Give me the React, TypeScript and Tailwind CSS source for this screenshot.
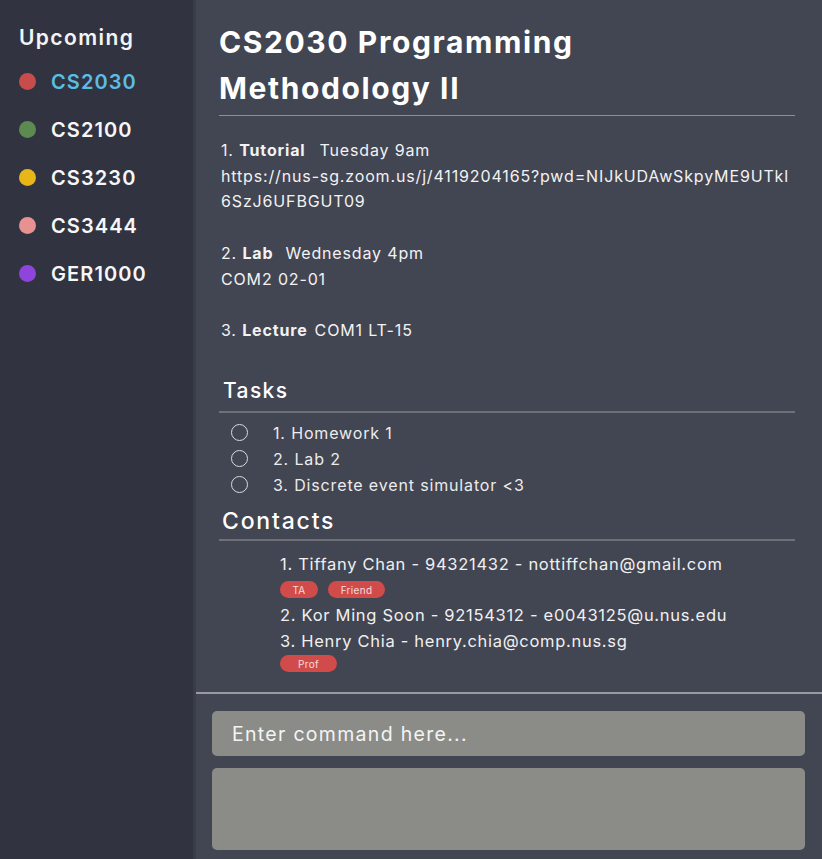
import React from 'react';

const modules = [
  { code: 'CS2030', dot: 'bg-[#c94c4c]', active: true },
  { code: 'CS2100', dot: 'bg-[#5d8a50]', active: false },
  { code: 'CS3230', dot: 'bg-[#e6b716]', active: false },
  { code: 'CS3444', dot: 'bg-[#e89191]', active: false },
  { code: 'GER1000', dot: 'bg-[#8e44dd]', active: false },
];

const tasks = ['1. Homework 1', '2. Lab 2', '3. Discrete event simulator <3'];

const Tag = ({ label, w }: { label: string; w: string }) => (
  <span className={`inline-flex h-[17px] ${w} items-center justify-center rounded-full bg-[#d24b4b] text-[10px] leading-none tracking-[0.3px] text-[#f3dede]`}>
    {label}
  </span>
);

export default function App() {
  return (
    <div className="flex h-screen w-full font-['Inter',sans-serif] text-white">
      {/* sidebar */}
      <aside className="w-[196px] shrink-0 border-r-[3px] border-[#3a3c48] bg-[#313440] pl-[19px] pt-[23px]">
        <h2 className="text-[21px] font-semibold leading-[30px] tracking-[1.4px] text-[#f4f4f4]">Upcoming</h2>
        <ul className="mt-[14px] flex flex-col gap-[19px]">
          {modules.map(m => (
            <li key={m.code} className="flex h-[29px] items-center">
              <span className={`h-[17px] w-[17px] rounded-full ${m.dot}`} />
              <span
                className={`ml-[15px] text-[20px] font-semibold tracking-[1.1px] ${m.active ? 'text-[#5cbde3]' : 'text-[#f7f7f7]'}`}
              >
                {m.code}
              </span>
            </li>
          ))}
        </ul>
      </aside>

      {/* main */}
      <main className="flex flex-1 flex-col bg-[#424552]">
        <section className="h-[692px] pl-[23px] pr-[27px] pt-[19px]">
          <h1 className="border-b border-[#8e8f94] pb-[4px] text-[30px] font-bold leading-[46px] tracking-[1.6px] text-white">
            CS2030 Programming
            <br />
            Methodology II
          </h1>

          <div className="mt-[22px] pl-[2px] text-[16px] leading-[25.7px] tracking-[0.85px] text-[#f2f2f2]">
            <p>
              1. <b>Tutorial</b>
              <span className="ml-[14px]">Tuesday 9am</span>
            </p>
            <p>https://nus-sg.zoom.us/j/4119204165?pwd=NIJkUDAwSkpyME9UTkl</p>
            <p>6SzJ6UFBGUT09</p>
            <p>&nbsp;</p>
            <p>
              2. <b>Lab</b>
              <span className="ml-[12px]">Wednesday 4pm</span>
            </p>
            <p>COM2 02-01</p>
            <p>&nbsp;</p>
            <p>
              3. <b>Lecture</b>
              <span className="ml-[7px]">COM1 LT-15</span>
            </p>
          </div>

          <h3 className="mt-[32px] border-b-2 border-[#6f7179] pb-[5px] pl-[4px] text-[21px] font-medium leading-[30px] tracking-[1.4px]">
            Tasks
          </h3>
          <ul className="mt-[7px] flex flex-col">
            {tasks.map(t => (
              <li key={t} className="flex h-[26px] items-center text-[16px] tracking-[0.85px] text-[#ececec]">
                <span className="ml-[12px] h-[17px] w-[17px] rounded-full border-[1.5px] border-[#dcdcdc]" />
                <span className="ml-[25px]">{t}</span>
              </li>
            ))}
          </ul>

          <h3 className="mt-[8px] border-b-2 border-[#6f7179] pb-[3px] pl-[3px] text-[23px] font-medium leading-[30px] tracking-[1.8px]">
            Contacts
          </h3>
          <div className="mt-[10px] pl-[61px] text-[16.5px] tracking-[0.7px] text-[#f0f0f0]">
            <p className="leading-[26px]">1. Tiffany Chan - 94321432 - nottiffchan@gmail.com</p>
            <div className="flex h-[26px] items-center gap-[10px]">
              <Tag label="TA" w="w-[38px]" />
              <Tag label="Friend" w="w-[57px]" />
            </div>
            <p className="leading-[25px]">2. Kor Ming Soon - 92154312 - e0043125@u.nus.edu</p>
            <p className="leading-[26px]">3. Henry Chia - henry.chia@comp.nus.sg</p>
            <div className="flex h-[20px] items-center">
              <Tag label="Prof" w="w-[57px]" />
            </div>
          </div>
        </section>

        <div className="flex flex-1 flex-col gap-[12px] border-t-2 border-[#9a9ba0] pb-[9px] pl-[16px] pr-[17px] pt-[17px]">
          <input
            placeholder="Enter command here..."
            className="h-[45px] w-full rounded-[5px] bg-[#8b8c87] px-[20px] text-[19.5px] tracking-[1.3px] text-white outline-none placeholder:text-[#f4f4f4]"
          />
          <div className="flex-1 rounded-[5px] bg-[#8b8c87]" />
        </div>
      </main>
    </div>
  );
}
